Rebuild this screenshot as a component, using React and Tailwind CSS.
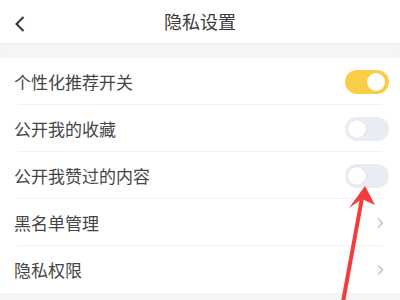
import React from "react";

const rows = [
  { label: "个性化推荐开关", type: "toggle", on: true },
  { label: "公开我的收藏", type: "toggle", on: false },
  { label: "公开我赞过的内容", type: "toggle", on: false },
  { label: "黑名单管理", type: "link" },
  { label: "隐私权限", type: "link" },
];

const Toggle = ({ on }) => (
  <div
    className={`relative w-[44px] h-[24px] rounded-full ${on ? "bg-[#f9cd45]" : "bg-[#eaecf3]"}`}
  >
    <div
      className={`absolute top-[3px] w-[18px] h-[18px] rounded-full bg-white ${on ? "right-[4px]" : "left-[3px] shadow-[0_0_1px_rgba(0,0,0,0.2)]"}`}
    />
  </div>
);

const Chevron = () => (
  <svg width="8" height="12" viewBox="0 0 8 12" fill="none" stroke="#c4c4c4" strokeWidth="1.5">
    <polyline points="2,1.5 6.5,6 2,10.5" />
  </svg>
);

export default function App() {
  return (
    <div
      className="relative w-[400px] h-[300px] overflow-hidden bg-[#f5f5f5]"
      style={{ fontFamily: '"Noto Sans CJK SC", "Noto Sans", sans-serif' }}
    >
      <div className="h-[43px] bg-white flex items-center relative">
        <svg className="absolute left-[13px] top-[15px]" width="14" height="18" viewBox="0 0 14 18" fill="none" stroke="#333" strokeWidth="2">
          <polyline points="10.5,2 3.5,9 10.5,16" />
        </svg>
        <div className="w-full text-center text-[18px] text-[#3a3a3a]">隐私设置</div>
      </div>
      <div className="h-[15px] bg-[#f5f5f5] shadow-[inset_0_1px_2px_rgba(0,0,0,0.04)]" />
      <div className="bg-white">
        {rows.map((r, i) => (
          <div key={r.label} className="relative h-[47px] flex items-center justify-between pl-[14px] pr-[11px]">
            <span className="text-[17px] text-[#454545] leading-none">{r.label}</span>
            {r.type === "toggle" ? <Toggle on={r.on} /> : <div className="pr-[5px]"><Chevron /></div>}
            {i < rows.length - 1 && (
              <div className="absolute bottom-0 left-[18px] right-[18px] h-px bg-[#f0f0f0]" />
            )}
          </div>
        ))}
      </div>
      <svg className="absolute left-0 top-0 pointer-events-none" width="400" height="300" viewBox="0 0 400 300">
        <line x1="362" y1="198" x2="343" y2="302" stroke="#f53b3b" strokeWidth="4" strokeLinecap="round" />
        <polygon points="365,186 375,205 362,199 349,208" fill="#f53b3b" />
      </svg>
    </div>
  );
}
